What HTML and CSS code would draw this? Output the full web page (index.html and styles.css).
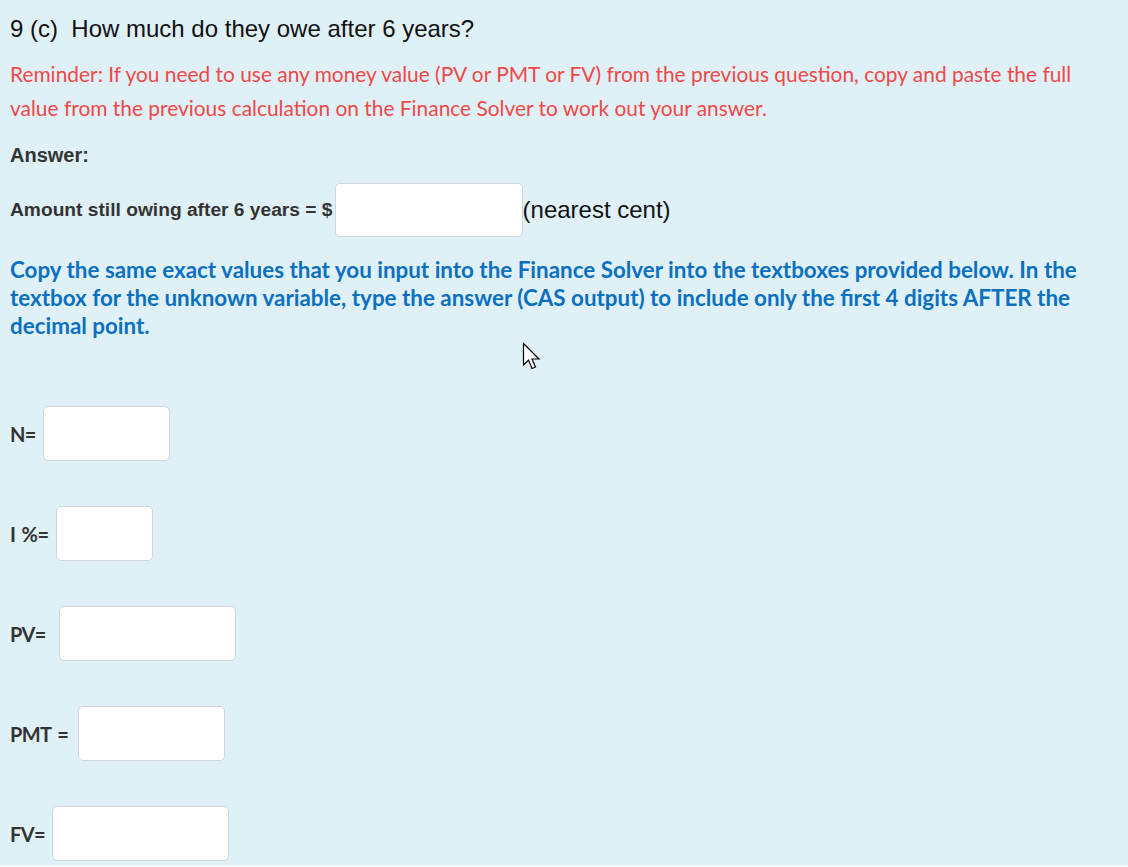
FILE: index.html
```html
<!DOCTYPE html>
<html lang="en">
  <head>
    <meta charset="UTF-8" />
    <meta name="viewport" content="width=device-width, initial-scale=1.0" />
    <title>Question 9 (c)</title>
    <link rel="stylesheet" href="styles.css">
  </head>
  <body>
    <main class="question">
      <h2 class="title">9 (c)&nbsp; How much do they owe after 6 years?</h2>

      <p class="reminder">
        Reminder: If you need to use any money value (PV or PMT or FV) from the previous question, copy and paste the full<br>
        value from the previous calculation on the Finance Solver to work out your answer.
      </p>

      <div class="answer-label">Answer:</div>

      <div class="answer-row">
        <label for="owing">Amount still owing after 6 years = $</label>
        <input type="text" id="owing" class="box box-owing" />
        <span class="unit">(nearest cent)</span>
      </div>

      <p class="instructions">
        Copy the same exact values that you input into the Finance Solver into the textboxes provided below. In the<br>
        textbox for the unknown variable, type the answer (CAS output) to include only the first 4 digits AFTER the<br>
        decimal point.
      </p>

      <!-- Finance Solver fields -->
      <div class="solver">
        <div class="field">
          <label for="n">N=</label>
          <input type="text" id="n" class="box box-n" />
        </div>
        <div class="field">
          <label for="i">I %=</label>
          <input type="text" id="i" class="box box-i" />
        </div>
        <div class="field">
          <label for="pv">PV=</label>
          <input type="text" id="pv" class="box box-pv" />
        </div>
        <div class="field">
          <label for="pmt">PMT =</label>
          <input type="text" id="pmt" class="box box-pmt" />
        </div>
        <div class="field">
          <label for="fv">FV=</label>
          <input type="text" id="fv" class="box box-fv" />
        </div>
      </div>

      <svg class="cursor" width="20" height="30" viewBox="0 0 20 30">
        <path d="M1.5 1.5 L1.5 23 L6.5 18 L10 26.5 L13.5 25 L10 17 L17 17 Z" fill="#fff" stroke="#000" stroke-width="1.2" />
      </svg>
    </main>
  </body>
</html>
```

FILE: styles.css
```css
* {
  box-sizing: border-box;
  margin: 0;
  padding: 0;
}

html {
  background-color: #f3f9fc;
}

body {
  font-family: "Liberation Sans", Arial, sans-serif;
  color: #333;
}

.question {
  position: relative;
  background-color: #dff0f7;
  padding: 15px 10px 4px;
}

.title {
  font-size: 24px;
  font-weight: normal;
  line-height: 28px;
  color: #111;
}

.reminder {
  margin-top: 14px;
  font-family: Lato, "Open Sans", sans-serif;
  font-size: 20.9px;
  line-height: 34px;
  color: #ef4848;
}

.answer-label {
  margin-top: 18px;
  font-size: 20px;
  font-weight: bold;
  line-height: 24px;
}

.answer-row {
  margin-top: 16px;
  display: flex;
  align-items: center;
}

.answer-row label {
  font-size: 19.2px;
  font-weight: bold;
}

.unit {
  font-size: 24px;
  color: #111;
}

.instructions {
  margin-top: 19px;
  font-family: Lato, "Open Sans", sans-serif;
  font-size: 22.4px;
  font-weight: bold;
  line-height: 28px;
  color: #0b70c0;
}

.solver {
  margin-top: 66px;
  display: flex;
  flex-direction: column;
  gap: 45px;
}

.field {
  display: flex;
  align-items: center;
}

.field label {
  font-family: Lato, "Open Sans", sans-serif;
  font-size: 20px;
  font-weight: bold;
  letter-spacing: -0.6px;
  word-spacing: 2px;
  color: #333;
}

.box {
  height: 54px;
  background-color: #fff;
  border: 1px solid #cfd6dc;
  border-radius: 5px;
  font-size: 18px;
  padding: 0 8px;
}

.solver .box {
  height: 55px;
}

.box-owing {
  width: 188px;
  margin-left: 2px;
}

.box-n {
  width: 127px;
  margin-left: 7px;
}

.box-i {
  width: 97px;
  margin-left: 8px;
}

.box-pv {
  width: 177px;
  margin-left: 13px;
}

.box-pmt {
  width: 147px;
  margin-left: 10px;
}

.box-fv {
  width: 177px;
  margin-left: 7px;
}

.cursor {
  position: absolute;
  left: 522px;
  top: 342px;
}
```
